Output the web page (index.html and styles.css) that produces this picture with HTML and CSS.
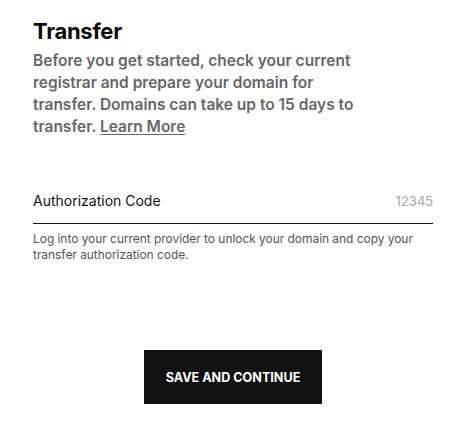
FILE: index.html
```html
<!DOCTYPE html>
<html>
<head>
<meta charset="utf-8">
<link rel="stylesheet" href="styles.css">
</head>
<body>
<main class="panel">
  <h1 class="title">Transfer</h1>
  <p class="intro">Before you get started, check your current registrar and prepare your domain for transfer. Domains can take up to 15 days to transfer. <a class="link" href="#">Learn More</a></p>
  <div class="field">
    <label class="field-label">Authorization Code</label>
    <span class="field-value">12345</span>
  </div>
  <p class="help">Log into your current provider to unlock your domain and copy your transfer authorization code.</p>
  <div class="actions">
    <button class="btn">SAVE AND CONTINUE</button>
  </div>
</main>
</body>
</html>
```
FILE: styles.css
```css
html, body {
  margin: 0;
  padding: 0;
  background: #fff;
}
body {
  font-family: Inter, "Liberation Sans", sans-serif;
  color: #111;
}
.panel {
  width: 400px;
  padding: 16px 0 0 33px;
}
.title {
  margin: 0;
  font-size: 22px;
  font-weight: 700;
  line-height: 30px;
  color: #0b0b0b;
  letter-spacing: -0.3px;
}
.intro {
  margin: 4px 0 0;
  font-size: 15.5px;
  font-weight: 600;
  line-height: 22px;
  color: #666;
  width: 330px;
}
.link {
  color: #666;
  text-decoration: underline;
  text-underline-offset: 2px;
}
.field {
  margin-top: 53px;
  display: flex;
  justify-content: space-between;
  align-items: baseline;
  padding-bottom: 12px;
  border-bottom: 1.5px solid #111;
}
.field-label {
  font-size: 14px;
  line-height: 20px;
  color: #111;
}
.field-value {
  font-size: 13.5px;
  letter-spacing: -0.3px;
  color: #a8a8a8;
}
.help {
  margin: 7px 0 0;
  font-size: 12px;
  line-height: 16px;
  color: #555;
  letter-spacing: -0.05px;
}
.actions {
  display: flex;
  justify-content: center;
  margin-top: 87px;
}
.btn {
  width: 178px;
  height: 54px;
  border: 0;
  background: #111;
  color: #fff;
  font-family: Inter, "Liberation Sans", sans-serif;
  font-size: 12.6px;
  font-weight: 700;
  letter-spacing: 0;
  cursor: pointer;
}
```
